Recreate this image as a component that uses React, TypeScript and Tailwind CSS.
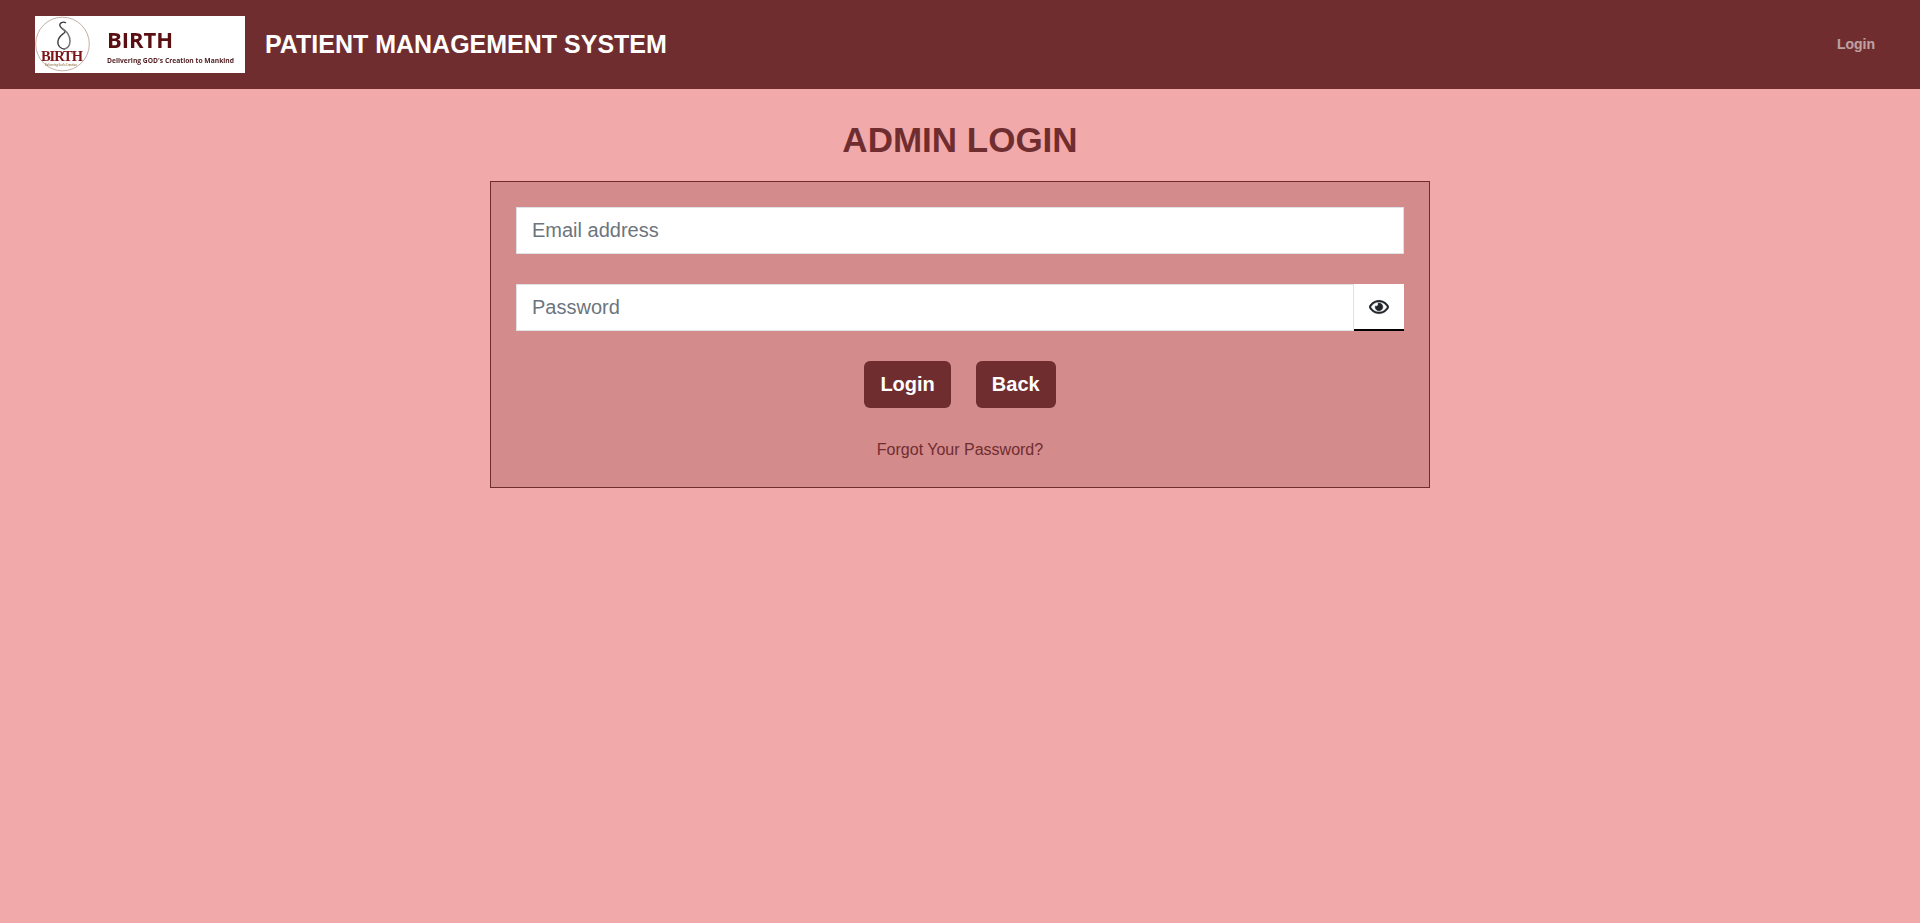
import { useState } from "react";
import { FaRegEye } from "react-icons/fa";

function BirthLogo() {
  return (
    <svg viewBox="0 0 210 57" className="h-[57px] w-[210px] shrink-0 bg-white">
      <g className="blur-[0.3px]">
        <circle cx="27.5" cy="28" r="26.8" fill="none" stroke="#b59a92" strokeWidth="0.8" />
        <path
          d="M31 7c-3-2-7 0-6 3 1 3 5 3 5 6-1 2-6 3-7 9-1 5 3 8 7 8"
          fill="none"
          stroke="#3a3a3a"
          strokeWidth="1.3"
        />
        <path d="M27 13c4 1 8 6 8 12 0 5-3 8-7 8" fill="none" stroke="#777" strokeWidth="1.6" />
        <text x="27" y="45" textAnchor="middle" fontFamily="'Liberation Serif', serif" fontWeight="700" fontSize="14.5" textLength="42" lengthAdjust="spacing" fill="#7a1518">
          BIRTH
        </text>
        <text x="26" y="49.5" textAnchor="middle" fontFamily="'Open Sans', sans-serif" fontWeight="700" fontSize="4" textLength="32" lengthAdjust="spacingAndGlyphs" fill="#a58a60">
          Delivering God's Creation
        </text>
        <text x="72" y="32" fontFamily="'Open Sans', sans-serif" fontWeight="700" fontSize="22" fill="#5a0f12">
          BIRTH
        </text>
        <text x="72" y="47" fontFamily="'Open Sans', sans-serif" fontWeight="700" fontSize="7.6" fill="#4f1c1e" textLength="127" lengthAdjust="spacingAndGlyphs">
          Delivering GOD's Creation to Mankind
        </text>
      </g>
    </svg>
  );
}

export default function App() {
  const [show, setShow] = useState(false);

  return (
    <div className="min-h-[923px] bg-[#f2a9a9] font-['Liberation_Sans',Arial,sans-serif]">
      <nav className="flex h-[89px] items-center justify-between bg-[#702d30] pl-[35px] pr-[45px]">
        <div className="flex items-center gap-5">
          <BirthLogo />
          <span className="text-[25px] leading-none font-bold text-white">PATIENT MANAGEMENT SYSTEM</span>
        </div>
        <a href="#" className="block pb-0.5 text-sm font-bold text-white/55">
          Login
        </a>
      </nav>

      <main className="flex flex-col items-center">
        <h1 className="mt-[30px] mb-[20px] text-[35px] leading-[42px] font-bold text-[#702d30]">ADMIN LOGIN</h1>

        <form className="flex w-[940px] flex-col border border-[#702d30] bg-[#d38b8b] px-[25px] pt-[25px] pb-[25px]">
          <input
            type="email"
            placeholder="Email address"
            className="h-[47px] w-full rounded-none border border-[#dee2e6] bg-white px-[15px] text-xl outline-none placeholder:text-[#6c757d]"
          />

          <div className="mt-[30px] flex h-[47px]">
            <input
              type={show ? "text" : "password"}
              placeholder="Password"
              className="h-[47px] min-w-0 flex-1 rounded-none border border-[#dee2e6] bg-white px-[15px] text-xl outline-none placeholder:text-[#6c757d]"
            />
            <button
              type="button"
              onClick={() => setShow((s) => !s)}
              className="flex w-[50px] items-center justify-center border-b-2 border-black bg-white text-[#212529]"
            >
              <FaRegEye size={20} strokeWidth={12} />
            </button>
          </div>

          <div className="mt-[30px] flex justify-center gap-[25px]">
            <button type="button" className="h-[47px] rounded-md bg-[#702d30] px-4 pb-0.5 text-xl font-bold text-white">
              Login
            </button>
            <button type="button" className="h-[47px] rounded-md bg-[#702d30] px-4 pb-0.5 text-xl font-bold text-white">
              Back
            </button>
          </div>

          <a href="#" className="mt-[30px] text-center text-base leading-6 text-[#702d30]">
            Forgot Your Password?
          </a>
        </form>
      </main>
    </div>
  );
}
